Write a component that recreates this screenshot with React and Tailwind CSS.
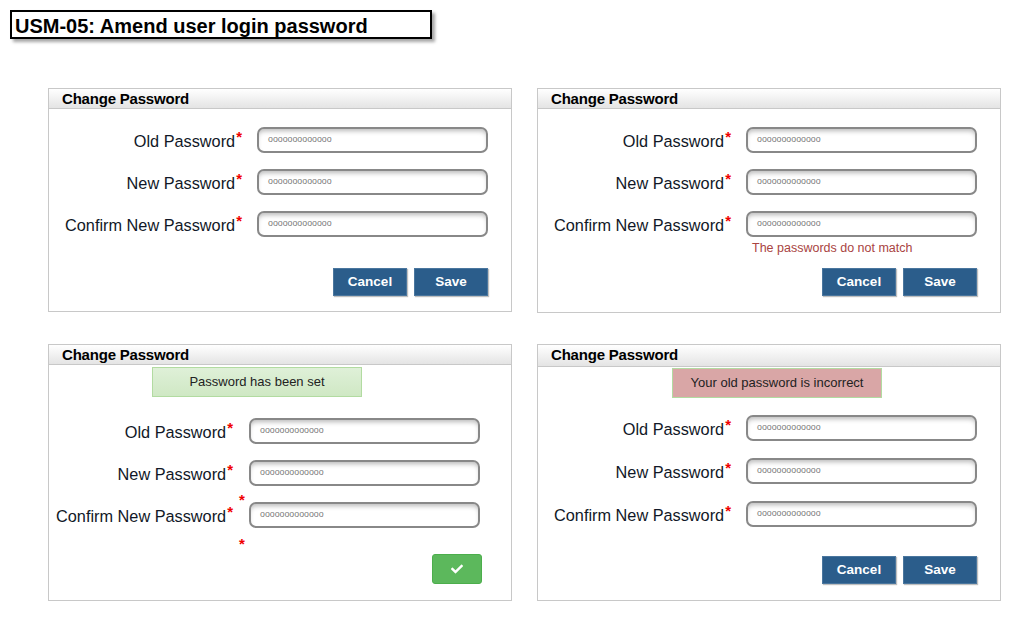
import React from "react";
import { FaCheck } from "react-icons/fa";

const font = { fontFamily: '"Liberation Sans", Arial, sans-serif' };

function Star() {
  return (
    <span className="text-[#f00000] font-bold text-[15px] leading-none ml-[1px] -mt-[3px]">*</span>
  );
}

function Field({ label, labelW = "w-[193px]", gap = "gap-[15px]" }) {
  return (
    <div className={`flex items-center ${gap}`}>
      <div className={`${labelW} flex justify-end items-start text-[16.3px] leading-[18px] text-[#111827] pt-[1px]`}>
        <span>{label}</span>
        <Star />
      </div>
      <div className="w-[231px] h-[26px] rounded-[7px] border-2 border-[#888] bg-white shadow-[inset_0_4px_5px_-2px_rgba(0,0,0,0.28)] pl-[9px] pt-[5px] text-[8.8px] leading-[10px] text-[#7a7a7a]">
        ooooooooooooo
      </div>
    </div>
  );
}

function Header({ h = "h-[20px]" }) {
  return (
    <div className={`${h} bg-gradient-to-b from-white to-[#e4e4e4] border-b border-[#c8c8c8] pl-[13px] text-[15px] font-bold leading-[20px] text-black tracking-[-0.2px]`}>
      Change Password
    </div>
  );
}

function Btn({ children }) {
  return (
    <div className="w-[74px] h-[28px] bg-[#2b5d8b] border border-[#4a769e] shadow-[1px_1px_1px_rgba(0,0,0,0.25)] text-white font-bold text-[13.5px] flex items-center justify-center">
      {children}
    </div>
  );
}

function Buttons() {
  return (
    <div className="flex justify-end gap-[7px] pr-[23px]">
      <Btn>Cancel</Btn>
      <Btn>Save</Btn>
    </div>
  );
}

export default function App() {
  return (
    <div className="w-[1036px] h-[637px] bg-white text-black" style={font}>
      <div className="pt-[10px] pl-[10px]">
        <div className="w-[422px] h-[29px] border-2 border-black pl-[3px] pt-[2px] text-[20px] font-bold leading-[25px] shadow-[3px_3px_3px_rgba(0,0,0,0.35)]">
          USM-05: Amend user login password
        </div>
      </div>
      <div className="pl-[48px] pt-[49px] grid grid-cols-[464px_464px] gap-x-[25px] gap-y-[31px] items-start">
        {/* Panel 1 */}
        <div className="border border-[#c8c8c8]">
          <Header />
          <div className="pt-[18px] flex flex-col gap-[16px]">
            <Field label="Old Password" />
            <Field label="New Password" />
            <Field label="Confirm New Password" />
          </div>
          <div className="h-[31px]" />
          <Buttons />
          <div className="h-[15px]" />
        </div>

        {/* Panel 2 */}
        <div className="border border-[#c8c8c8]">
          <Header />
          <div className="pt-[18px] flex flex-col gap-[16px]">
            <Field label="Old Password" />
            <Field label="New Password" />
            <Field label="Confirm New Password" />
          </div>
          <div className="h-[31px] pl-[214px] pt-[4px] text-[12.5px] leading-[14px] text-[#a94442]">
            The passwords do not match
          </div>
          <Buttons />
          <div className="h-[16px]" />
        </div>

        {/* Panel 3 */}
        <div className="relative border border-[#c8c8c8]">
          <Header />
          <div className="pt-[2px] pl-[103px]">
            <div className="w-[210px] h-[30px] bg-gradient-to-b from-[#dff0d8] to-[#cfe8c4] border border-[#b2dba1] text-[13px] text-[#222] flex items-center justify-center">
              Password has been set
            </div>
          </div>
          <div className="pt-[21px] flex flex-col gap-[16px]">
            <Field label="Old Password" labelW="w-[184px]" gap="gap-[16px]" />
            <Field label="New Password" labelW="w-[184px]" gap="gap-[16px]" />
            <Field label="Confirm New Password" labelW="w-[184px]" gap="gap-[16px]" />
          </div>
          <div className="pt-[26px] flex justify-end pr-[29px]">
            <div className="w-[50px] h-[30px] rounded-[3px] bg-[#5cb85c] border border-[#4cae4c] flex items-center justify-center text-white">
              <FaCheck size={12} />
            </div>
          </div>
          <div className="h-[16px]" />
          <span className="absolute left-[190px] top-[147px] text-[#f00000] font-bold text-[15px] leading-none">*</span>
          <span className="absolute left-[190px] top-[191px] text-[#f00000] font-bold text-[15px] leading-none">*</span>
        </div>

        {/* Panel 4 */}
        <div className="border border-[#c8c8c8]">
          <Header h="h-[22px]" />
          <div className="pt-[1px] pl-[134px]">
            <div className="w-[210px] h-[30px] bg-[#d9a6a6] border border-[#b2dba1] text-[13px] text-[#222] flex items-center justify-center">
              Your old password is incorrect
            </div>
          </div>
          <div className="pt-[17px] flex flex-col gap-[17px]">
            <Field label="Old Password" />
            <Field label="New Password" />
            <Field label="Confirm New Password" />
          </div>
          <div className="h-[29px]" />
          <Buttons />
          <div className="h-[16px]" />
        </div>
      </div>
    </div>
  );
}
